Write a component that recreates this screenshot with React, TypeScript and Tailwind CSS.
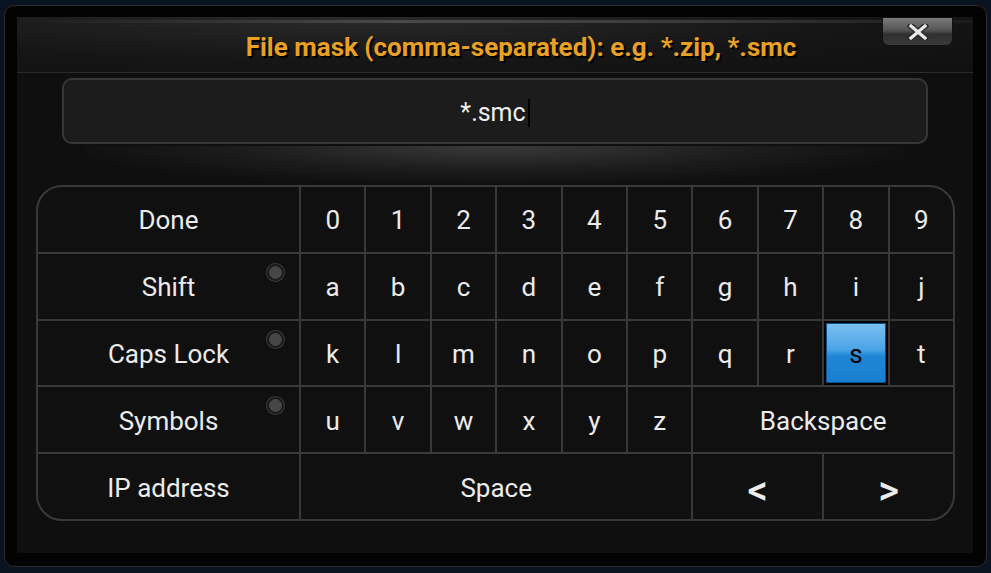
import React from 'react';

const DIGITS = ['0', '1', '2', '3', '4', '5', '6', '7', '8', '9'];
const ROW_A = ['a', 'b', 'c', 'd', 'e', 'f', 'g', 'h', 'i', 'j'];
const ROW_K = ['k', 'l', 'm', 'n', 'o', 'p', 'q', 'r', 's', 't'];
const ROW_U = ['u', 'v', 'w', 'x', 'y', 'z'];

function Key({ label, className = '', radio = false, active = false }: { label: string; className?: string; radio?: boolean; active?: boolean }) {
  if (active) {
    return (
      <div className={`flex items-center justify-center bg-black p-[2px] ${className}`}>
        <div className="flex h-full w-full items-center justify-center rounded-[2px] bg-[linear-gradient(180deg,#7cc0f0_0%,#4aa3e6_45%,#1f86d6_55%,#1a7fd0_100%)] pt-[3px] text-[26px] text-black shadow-[inset_0_0_0_1px_#0c4f8a]">
          {label}
        </div>
      </div>
    );
  }
  return (
    <div className={`relative flex items-center justify-center bg-[#101010] pt-[3px] text-[26px] text-[#ebebeb] ${className}`}>
      {label}
      {radio && (
        <span className="absolute right-[15px] top-[10px] h-[17px] w-[17px] rounded-full border-2 border-[#1a1a1a] bg-[#464646] shadow-[0_0_0_1px_#3a3a3a]" />
      )}
    </div>
  );
}

export default function App() {
  return (
    <div className="h-[573px] w-[991px] overflow-hidden bg-[#0a1420] font-['Roboto',sans-serif]">
      <div className="ml-[4px] mt-[5px] h-[562px] w-[983px] rounded-[10px] border border-[#2c2c2c] bg-[#030303] pb-[13px] pl-[12px] pr-[13px] pt-[11px]">
        <div className="flex h-[536px] w-[956px] flex-col bg-[#0f0f0f]">
          {/* Header */}
          <div className="relative flex h-[56px] items-center justify-center border-b border-[#2a2a2a] bg-[radial-gradient(ellipse_at_35%_0%,#2a2a2a_0%,#161616_55%,#101010_100%)] pl-[52px]">
            <div className="absolute left-0 right-0 top-[3px] h-[3px] bg-[linear-gradient(90deg,#1c1c1c,#4a4a4a_40%,#3a3a3a_70%,#1c1c1c)]" />
            <span className="mt-[5px] text-[26px] font-bold text-[#eaa022] [text-shadow:2px_2px_0_#000]">
              File mask (comma-separated): e.g. *.zip, *.smc
            </span>
            <div className="absolute right-[20px] top-0 flex h-[29px] w-[71px] items-center justify-center rounded-b-[7px] border border-[#111] bg-[linear-gradient(180deg,#7a7a7a_0%,#555_45%,#303030_60%,#3a3a3a_100%)]">
              <svg width="22" height="16" viewBox="0 0 22 16">
                <path d="M4 2 L18 14 M18 2 L4 14" stroke="#2a2a2a" strokeWidth="6" strokeLinecap="square" />
                <path d="M4 2 L18 14 M18 2 L4 14" stroke="#e8e8e8" strokeWidth="3.2" strokeLinecap="square" />
              </svg>
            </div>
          </div>

          {/* Input */}
          <div className="ml-[45px] mt-[5px] flex h-[66px] w-[866px] items-center justify-center rounded-[10px] border-2 border-[#373737] bg-[#1c1c1c] pt-[4px] text-[25px] text-[#f0f0f0]">
            *.smc<span className="ml-[2px] h-[28px] w-[2px] bg-black" />
          </div>

          {/* Glow */}
          <div className="mx-auto mt-[2px] h-[38px] w-[820px] bg-[radial-gradient(ellipse_at_50%_0%,#3a3a3a_0%,#1c1c1c_45%,#0f0f0f_75%)]" />

          {/* Keyboard */}
          <div className="ml-[19px] mt-[1px] grid h-[336px] w-[919px] grid-cols-[261px_repeat(10,1fr)] grid-rows-5 gap-[2px] overflow-hidden rounded-[26px] border-2 border-[#393939] bg-[#393939]">
            <Key label="Done" />
            {DIGITS.map((d) => <Key key={d} label={d} />)}
            <Key label="Shift" radio />
            {ROW_A.map((c) => <Key key={c} label={c} />)}
            <Key label="Caps Lock" radio />
            {ROW_K.map((c) => <Key key={c} label={c} active={c === 's'} />)}
            <Key label="Symbols" radio />
            {ROW_U.map((c) => <Key key={c} label={c} />)}
            <Key label="Backspace" className="col-span-4" />
            <Key label="IP address" />
            <Key label="Space" className="col-span-6" />
            <Key label="<" className="col-span-2 pt-[8px] text-[40px]! font-medium" />
            <Key label=">" className="col-span-2 pt-[8px] text-[40px]! font-medium" />
          </div>
        </div>
      </div>
    </div>
  );
}
